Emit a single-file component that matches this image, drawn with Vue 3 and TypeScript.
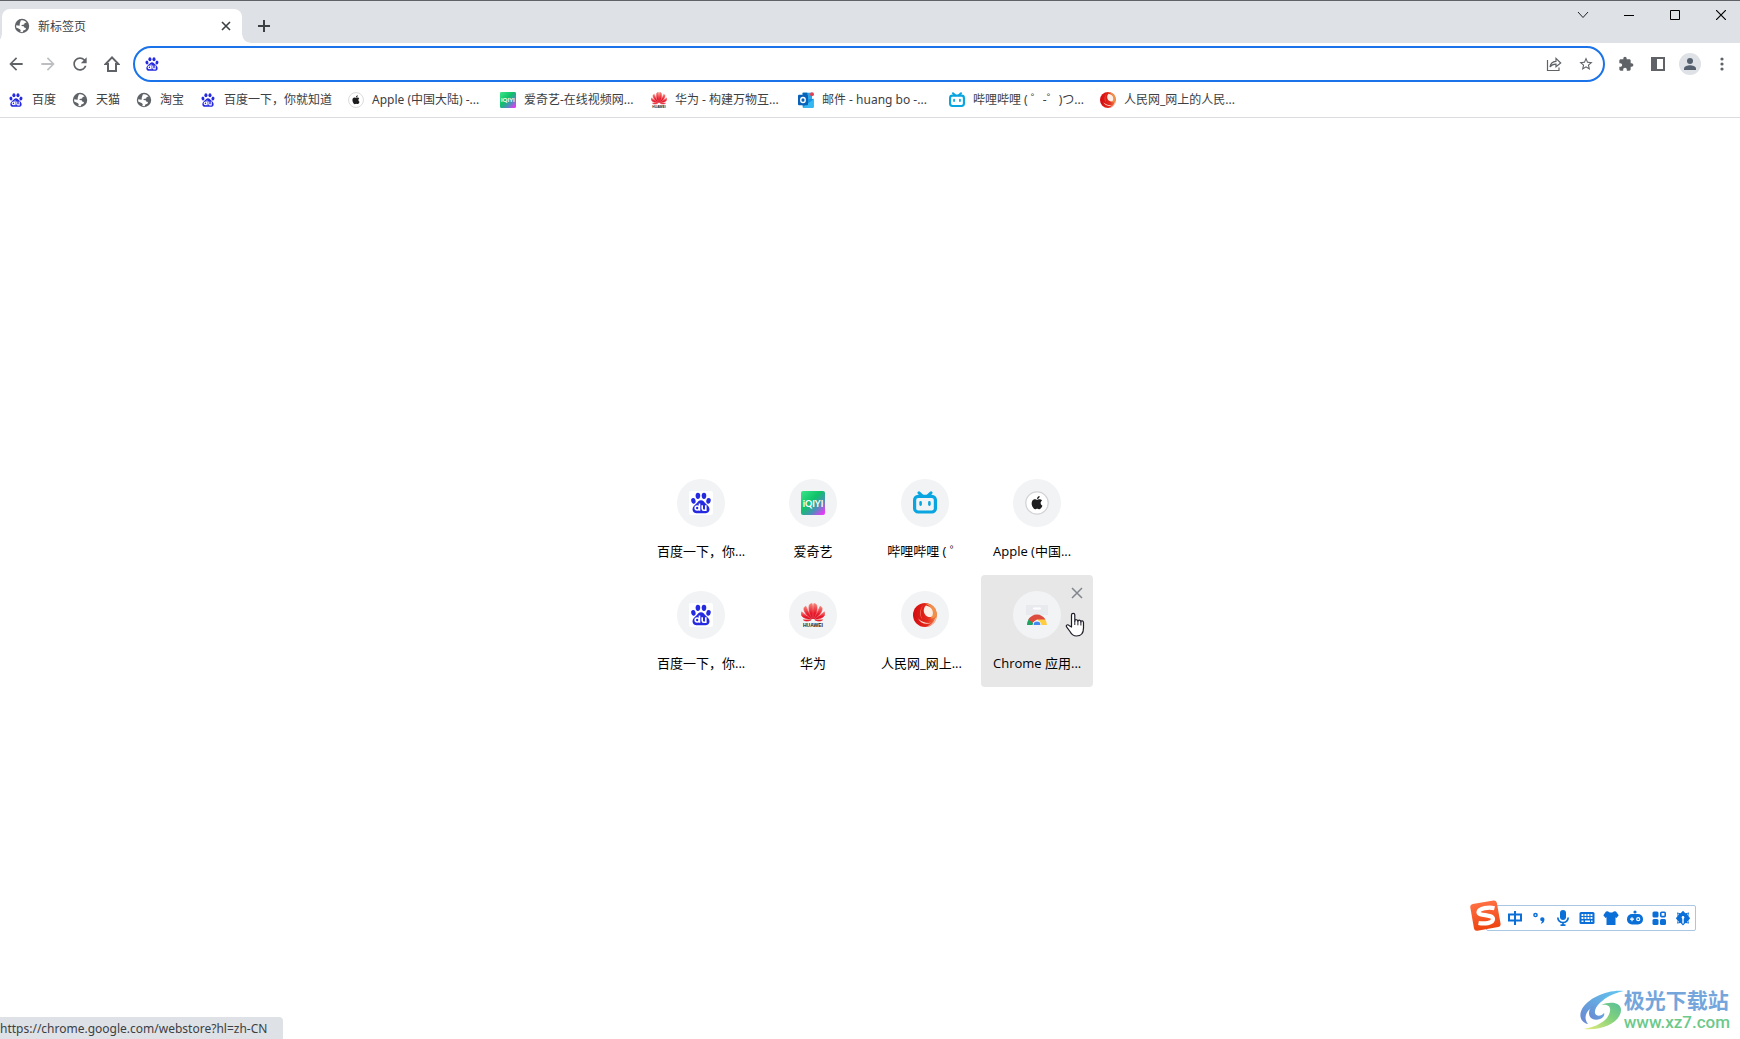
<script setup lang="ts">
import { ref } from 'vue'

interface Bookmark {
  icon: string
  label: string
  width: number
}

interface Shortcut {
  icon: string
  label: string
  clipped?: boolean
  hovered?: boolean
}

const address = ref('')

const bookmarks: Bookmark[] = [
  { icon: 'baidu', label: '百度', width: 24 },
  { icon: 'globe', label: '天猫', width: 24 },
  { icon: 'globe', label: '淘宝', width: 24 },
  { icon: 'baidu', label: '百度一下，你就知道', width: 108 },
  { icon: 'apple', label: 'Apple (中国大陆) -...', width: 112 },
  { icon: 'iqiyi', label: '爱奇艺-在线视频网...', width: 111 },
  { icon: 'huawei', label: '华为 - 构建万物互...', width: 107 },
  { icon: 'outlook', label: '邮件 - huang bo -...', width: 111 },
  { icon: 'bili', label: '哔哩哔哩 ( ゜-゜)つ...', width: 111 },
  { icon: 'people', label: '人民网_网上的人民...', width: 112 },
]

const shortcuts: Shortcut[] = [
  { icon: 'baidu', label: '百度一下，你...', clipped: true },
  { icon: 'iqiyi', label: '爱奇艺' },
  { icon: 'bili', label: '哔哩哔哩 ( ゜' },
  { icon: 'apple', label: 'Apple (中国...', clipped: true },
  { icon: 'baidu', label: '百度一下，你...', clipped: true },
  { icon: 'huawei', label: '华为' },
  { icon: 'people', label: '人民网_网上...', clipped: true },
  { icon: 'store', label: 'Chrome 应用...', clipped: true, hovered: true },
]

const imeTools = ['zhong', 'punct', 'mic', 'keyboard', 'shirt', 'game', 'grid', 'gear']
</script>

<template>
  <div class="browser">
    <svg class="sprite" aria-hidden="true">
      <defs>
        <linearGradient id="g-iqiyi" x1="0" y1="0" x2="1" y2="1">
          <stop offset="0" stop-color="#3be58a" />
          <stop offset=".42" stop-color="#0fc268" />
          <stop offset=".68" stop-color="#4a90b8" />
          <stop offset=".92" stop-color="#e23cf5" />
        </linearGradient>
        <linearGradient id="g-huawei" x1="0" y1="0" x2="0" y2="1">
          <stop offset="0" stop-color="#f5837a" />
          <stop offset=".6" stop-color="#ea1c2c" />
          <stop offset="1" stop-color="#d80a1e" />
        </linearGradient>
        <linearGradient id="g-people" x1="0" y1="0" x2="1" y2="0">
          <stop offset="0" stop-color="#d40a10" />
          <stop offset=".6" stop-color="#e32a1c" />
          <stop offset="1" stop-color="#f08a44" />
        </linearGradient>
        <linearGradient id="g-sogou" x1="0" y1="0" x2="0" y2="1">
          <stop offset="0" stop-color="#ff7043" />
          <stop offset="1" stop-color="#ee4410" />
        </linearGradient>
        <linearGradient id="g-swirl-a" x1="0" y1="1" x2="1" y2="0">
          <stop offset="0" stop-color="#6a86d0" />
          <stop offset="1" stop-color="#62c8f0" />
        </linearGradient>
        <linearGradient id="g-swirl-b" x1="0" y1="1" x2="1" y2="0">
          <stop offset="0" stop-color="#e8ec7a" />
          <stop offset=".6" stop-color="#7fd07c" />
          <stop offset="1" stop-color="#58bf9c" />
        </linearGradient>
      </defs>
      <symbol id="i-baidu" viewBox="0 0 24 24">
        <rect width="24" height="24" rx="2" fill="#fff" />
        <g fill="#2529e0">
          <ellipse cx="8.900" cy="4.800" rx="2.300" ry="3.100" />
          <ellipse cx="15" cy="4.800" rx="2.300" ry="3.100" />
          <ellipse cx="4.400" cy="9.800" rx="2.200" ry="2.900" transform="rotate(-12 4.400 9.800)" />
          <ellipse cx="19.500" cy="9.800" rx="2.200" ry="2.900" transform="rotate(12 19.500 9.800)" />
          <path d="M12 9.200c2.200 0 3.300 1.900 4.600 3.300 1.600 1.700 3.900 3.200 3.900 5.700 0 2.600-1.800 4.100-4.200 4.100H7.700c-2.400 0-4.200-1.500-4.200-4.100 0-2.500 2.300-4 3.900-5.700 1.300-1.400 2.400-3.300 4.600-3.300z" />
        </g>
        <g fill="none" stroke="#fff" stroke-width="1.600">
          <circle cx="8.200" cy="17" r="2" />
          <path d="M10.500 12.600v7.200M13.200 14.200v3.400c0 1.300.7 1.700 1.600 1.700h2v-5.100" />
        </g>
      </symbol>
      <symbol id="i-globe" viewBox="0 0 16 16">
        <circle cx="8" cy="8" r="7.200" fill="#5f6368" />
        <path d="M6.800 2.400c2.800-.6 4.800.5 5.800 2.200l-1.900.4-.6 1.500-2.300.4-.5 1.200 2.400.1.800 1.500 1.500.3-.6 1.800-2.100.7-.6 1.700-2.300-.2.300-1.900-1.200-1.200-3.300-1.400L2.200 7.300 5.600 7.700 5.800 5.400z" fill="#fff" />
      </symbol>
      <symbol id="i-apple" viewBox="0 0 24 24">
        <circle cx="12" cy="12" r="11.200" fill="#fff" stroke="#d2d2d6" stroke-width="1.200" />
        <g transform="translate(5.400 5) scale(.55)" fill="#1d1d1f">
          <path d="M12.152 6.896c-.948 0-2.415-1.078-3.960-1.040-2.040.027-3.910 1.183-4.961 3.014-2.117 3.675-.546 9.103 1.519 12.090 1.013 1.454 2.208 3.090 3.792 3.039 1.520-.065 2.090-.987 3.935-.987 1.831 0 2.350.987 3.960.948 1.637-.026 2.676-1.480 3.676-2.948 1.156-1.688 1.636-3.325 1.662-3.415-.039-.013-3.182-1.221-3.220-4.857-.026-3.040 2.480-4.494 2.597-4.559-1.429-2.090-3.623-2.324-4.390-2.376-2-.156-3.675 1.090-4.610 1.090zM15.530 3.830c.843-1.012 1.400-2.427 1.245-3.830-1.207.052-2.662.805-3.532 1.818-.780.896-1.454 2.338-1.273 3.714 1.338.104 2.715-.688 3.560-1.702z" />
        </g>
      </symbol>
      <symbol id="i-iqiyi" viewBox="0 0 24 24">
        <rect width="24" height="24" rx="2" fill="url(#g-iqiyi)" />
      </symbol>
      <symbol id="i-huawei" viewBox="0 0 24 24">
        <g fill="url(#g-huawei)" stroke="url(#g-huawei)" stroke-width=".7">
          <path d="M11.500 16C8.600 11.500 7.200 6.300 8.300 2.200c.2-.9 1.700-1.600 2.800-1.700.9 4.500.9 10.500.4 15.500z" />
          <path d="M12.500 16c2.900-4.500 4.300-9.700 3.200-13.800-.2-.9-1.700-1.600-2.800-1.700-.9 4.500-.9 10.500-.4 15.500z" />
          <path d="M10.700 16C6.500 13.200 2.700 9 2.900 5.600c.1-1.200 1-2 2-2.400C6.500 7.600 9 12 10.700 16z" />
          <path d="M13.300 16c4.200-2.800 8-7 7.800-10.400-.1-1.200-1-2-2-2.400C17.500 7.600 15 12 13.300 16z" />
          <path d="M10.200 16.500C6 16.300 1.300 14.600.3 11.800c-.4-1.200-.2-2.200.3-3C3.600 11.500 7.500 14 10.200 16.500z" />
          <path d="M13.800 16.500c4.200-.2 8.900-1.900 9.900-4.700.4-1.200.2-2.200-.3-3-3 2.700-6.900 5.200-9.600 7.700z" />
          <path d="M9.800 17.100c-2.600 1.100-5.600 1.500-7.800-.6 2.600.1 5.200.2 7.800.6zM14.200 17.100c2.600 1.100 5.600 1.500 7.800-.6-2.600.1-5.200.2-7.800.6z" />
        </g>
      </symbol>
      <symbol id="i-outlook" viewBox="0 0 24 24">
        <rect x="7" y="1" width="14" height="20" rx="1" fill="#28a8ea" />
        <path d="M7 1h7v10H7z" fill="#0364b8" />
        <path d="M7 12l16.500-2v12c0 1-.6 1.600-1.500 1.600H8.500C7.600 23.600 7 23 7 22z" fill="#1490df" />
        <path d="M7 23l16.500-12v11c0 1-.6 1.600-1.500 1.600H8z" fill="#35b8f1" />
        <rect y="4" width="15" height="16" rx="1.500" fill="#0a62b8" />
        <ellipse cx="7.500" cy="12" rx="3.400" ry="3.800" fill="none" stroke="#fff" stroke-width="2" />
        <circle cx="21" cy="3.500" r="3" fill="#e8404f" />
      </symbol>
      <symbol id="i-bili" viewBox="0 0 24 24">
        <g fill="none" stroke="#08a5e0" stroke-linecap="round">
          <rect x="1.600" y="5.400" width="20.800" height="15.600" rx="3.600" stroke-width="3.200" />
          <path d="M6 1.800l3.200 3M18 1.800l-3.200 3" stroke-width="3" />
          <path d="M7.600 11.400v2.200M16.400 11.400v2.200" stroke-width="2.600" />
        </g>
      </symbol>
      <symbol id="i-people" viewBox="0 0 24 24">
        <circle cx="12" cy="12" r="12" fill="url(#g-people)" />
        <path d="M13 2.500C9.800 5 10 10.800 13.800 13.200c2.500 1.500 5 1 6.600-.6C22 8 19 4 13 2.500z" fill="#fdeee6" />
        <path d="M12 .5C19 0 24 5.500 23.600 12.500c-1.600 2.300-4 3.300-6.300 3 4.500-3.500 3.500-11.500-5.300-15z" fill="#f0904a" />
        <path d="M10.500 2C6.500 6 6 12.500 9.500 16.500 7.200 13 6.900 6 10.500 2z" fill="#f5805f" />
        <path d="M5 15.500c2.500 4.800 8 6.700 13.200 4.300-5 .6-9.700-.7-13.200-4.300z" fill="#fbd9cc" />
        <path d="M23.600 14A12 12 0 0 1 13 24c5-2.200 8-5 9-8.500z" fill="#fff" opacity=".55" />
      </symbol>
      <symbol id="i-store" viewBox="0 0 24 24">
        <path d="M1 2h22v10H1z" fill="#e8eaed" />
        <rect x="8" y="4.500" width="8" height="2" rx="1" fill="#fff" />
        <path d="M2 22a10 10 0 0 1 3.300-7.500L9 22z" fill="#1ea362" />
        <path d="M22 22a10 10 0 0 0-3-7h-7l3 7z" fill="#ffcd40" />
        <path d="M3.300 16.500a10 10 0 0 1 17.200 0H12l-4.300 3.200z" fill="#dd4b3e" />
        <path d="M7.600 22a4.400 4.400 0 0 1 8.800 0z" fill="#fff" />
        <path d="M8.600 22a3.400 3.400 0 0 1 6.800 0z" fill="#4688f1" />
      </symbol>

      <symbol id="i-zhong" viewBox="0 0 16 16">
        <path d="M2 4.500h12v6H2zM8 1v14" fill="none" stroke="#0b6fd8" stroke-width="2" />
      </symbol>
      <symbol id="i-punct" viewBox="0 0 16 16">
        <circle cx="4.500" cy="5" r="1.600" fill="none" stroke="#0b6fd8" stroke-width="1.500" />
        <path d="M11.200 7.300a2.200 2.200 0 0 1 2.200 2.500c0 2-1.100 3.300-3 4l-.5-1.100c.8-.3 1.200-.7 1.300-1.300a2.050 2.050 0 1 1 0-4.100z" fill="#0b6fd8" />
      </symbol>
      <symbol id="i-mic" viewBox="0 0 16 16">
        <rect x="5" width="6" height="10" rx="3" fill="#0b6fd8" />
        <path d="M2.800 7.500a5.200 5 0 0 0 10.400 0M8 12.500V15M5.500 15.200h5" fill="none" stroke="#0b6fd8" stroke-width="1.700" />
      </symbol>
      <symbol id="i-keyboard" viewBox="0 0 16 16">
        <rect x=".5" y="2" width="15" height="12" rx="1.500" fill="#0b6fd8" />
        <path d="M2.500 5h11M2.500 8h11" stroke="#fff" stroke-width="1.800" stroke-dasharray="1.900 1.100" />
        <path d="M2.500 11.300h2M6 11.300h5M12 11.300h1.500" stroke="#fff" stroke-width="1.500" />
      </symbol>
      <symbol id="i-shirt" viewBox="0 0 16 16">
        <path d="M5 1.200c1 1.700 5 1.700 6 0l2 .3 2.700 3.700-2.200 2.700-1-.6V15h-9V7.300l-1 .6L.3 5.200 3 1.500z" fill="#0b6fd8" />
      </symbol>
      <symbol id="i-game" viewBox="0 0 16 16">
        <circle cx="8" cy="2" r="1.600" fill="#0b6fd8" />
        <rect x="0" y="4" width="16" height="10.500" rx="5" fill="#0b6fd8" />
        <path d="M3 9.200h4M5 7.200v4" stroke="#fff" stroke-width="1.200" />
        <circle cx="11.200" cy="9.200" r="1.500" fill="none" stroke="#fff" stroke-width="1.200" />
      </symbol>
      <symbol id="i-grid" viewBox="0 0 16 16">
        <g fill="#0b6fd8">
          <rect x="1.500" y="1.500" width="6" height="6" rx="1.500" />
          <rect x="1.500" y="9" width="6" height="6" rx="1.500" />
          <rect x="9" y="9" width="6" height="6" rx="1.500" />
        </g>
        <rect x="9.800" y="2.200" width="4.400" height="4.400" rx=".8" fill="none" stroke="#0b6fd8" stroke-width="1.600" />
      </symbol>
      <symbol id="i-gear" viewBox="0 0 16 16">
        <path d="M8 .8l2.400 2.400 3.700-.6-.7 3.400 1.700 2.200-1.700 2.200.7 3.200-3.700-.5L8 15.400l-2.400-2.300-3.700.5.700-3.200L.9 8.200 2.600 6l-.7-3.400 3.700.6z" fill="#0b6fd8" />
        <path d="M8 13.500V7.500" stroke="#fff" stroke-width="1.400" />
        <circle cx="8" cy="7.400" r="1.300" fill="#fff" />
        <path d="M3.200 3.500v1.600M12.800 3.500v1.600M3.200 11v1.600M12.800 11v1.600" stroke="#fff" stroke-width=".8" />
      </symbol>
    </svg>

    <header class="tab-strip">
      <div class="tab">
        <svg class="tab-icon" viewBox="0 0 16 16"><use href="#i-globe" /></svg>
        <span class="tab-title">新标签页</span>
        <button class="tab-close" aria-label="关闭标签页">
          <svg width="10" height="10" viewBox="0 0 10 10"><path d="M1 1l8 8M9 1l-8 8" stroke="#3c4043" stroke-width="1.600" /></svg>
        </button>
      </div>
      <button class="new-tab" aria-label="打开新的标签页">
        <svg width="12" height="12" viewBox="0 0 12 12"><path d="M6 0v12M0 6h12" stroke="#3c4043" stroke-width="2" /></svg>
      </button>
      <div class="window-controls">
        <button aria-label="搜索标签页">
          <svg width="12" height="12" viewBox="0 0 12 12"><path d="M1 3l5 5.500L11 3" fill="none" stroke="#222" /></svg>
        </button>
        <button aria-label="最小化">
          <svg width="10" height="10" viewBox="0 0 10 10"><path d="M0 5.500h10" stroke="#000" /></svg>
        </button>
        <button aria-label="最大化">
          <svg width="10" height="10" viewBox="0 0 10 10"><path d="M.5.500h9v9h-9z" fill="none" stroke="#000" /></svg>
        </button>
        <button aria-label="关闭">
          <svg width="10" height="10" viewBox="0 0 10 10"><path d="M0 0l10 10M10 0L0 10" stroke="#000" stroke-width="1.200" /></svg>
        </button>
      </div>
    </header>

    <div class="toolbar">
      <button class="tool" aria-label="后退">
        <svg width="20" height="20" viewBox="0 0 24 24"><path d="M20 10.900H7.800l5.600-5.500L12 4l-8 8 8 8 1.400-1.400-5.600-5.500H20z" fill="#5f6368" /></svg>
      </button>
      <button class="tool" aria-label="前进">
        <svg width="20" height="20" viewBox="0 0 24 24"><path d="M4 10.900h12.200l-5.600-5.500L12 4l8 8-8 8-1.400-1.400 5.600-5.500H4z" fill="#bcbec1" /></svg>
      </button>
      <button class="tool" aria-label="重新加载">
        <svg width="20" height="20" viewBox="0 0 24 24"><path d="M17.650 6.350C16.200 4.900 14.210 4 12 4c-4.420 0-7.990 3.580-7.990 8s3.570 8 7.990 8c3.730 0 6.840-2.550 7.730-6h-2.080c-.82 2.330-3.040 4-5.650 4-3.310 0-6-2.690-6-6s2.690-6 6-6c1.660 0 3.140.69 4.220 1.780L13 11h7V4z" fill="#5f6368" /></svg>
      </button>
      <button class="tool" aria-label="主页">
        <svg width="16" height="16" viewBox="0 0 16 16"><path d="M8 1.400L1.600 8H4v7h8V8h2.400z" fill="none" stroke="#5f6368" stroke-width="2" /></svg>
      </button>
      <div class="omnibox">
        <svg class="site-icon" viewBox="0 0 24 24"><use href="#i-baidu" /></svg>
        <input v-model="address" class="address" type="text" aria-label="地址和搜索栏" />
        <button class="tool" aria-label="分享">
          <svg width="16" height="16" viewBox="0 0 16 16"><path d="M1.500 4v10.500h11.500v-3M4 11c.4-3.600 2.400-5.500 6-5.700V2.400L14.700 7 10 10.800V8.200C7.300 8.100 5.400 9 4 11z" fill="none" stroke="#5f6368" stroke-width="1.200" /></svg>
        </button>
        <button class="tool" aria-label="为此标签页添加书签">
          <svg width="16" height="16" viewBox="0 0 24 24"><path d="M22 9.240l-7.190-.62L12 2 9.190 8.630 2 9.240l5.460 4.730L5.820 21 12 17.270 18.180 21l-1.630-7.030zM12 15.400l-3.760 2.270 1-4.280-3.320-2.880 4.380-.38L12 6.100l1.710 4.040 4.380.38-3.320 2.880 1 4.280z" fill="#5f6368" /></svg>
        </button>
      </div>
      <div class="toolbar-end">
        <button class="tool" aria-label="扩展程序">
          <svg width="16" height="16" viewBox="0 0 24 24"><path d="M20.500 11H19V7c0-1.100-.9-2-2-2h-4V3.500C13 2.120 11.880 1 10.500 1S8 2.120 8 3.500V5H4c-1.100 0-1.990.9-1.990 2v3.800H3.500c1.490 0 2.700 1.210 2.700 2.700s-1.210 2.700-2.700 2.700H2V20c0 1.100.9 2 2 2h3.800v-1.500c0-1.490 1.210-2.700 2.700-2.700s2.700 1.210 2.700 2.700V22H17c1.100 0 2-.9 2-2v-4h1.500c1.380 0 2.500-1.120 2.500-2.500S21.880 11 20.500 11z" fill="#5f6368" /></svg>
        </button>
        <button class="tool" aria-label="侧边栏">
          <svg width="14" height="14" viewBox="0 0 14 14"><path d="M0 0h14v14H0zM6 2v10h6V2z" fill="#5f6368" fill-rule="evenodd" /></svg>
        </button>
        <button class="tool" aria-label="个人资料">
          <svg width="22" height="22" viewBox="0 0 22 22"><circle cx="11" cy="11" r="11" fill="#dee1e6" /><circle cx="11" cy="8" r="3" fill="#55606f" /><path d="M5 17v-1.500C5 13.300 9 12.300 11 12.300s6 1 6 3.200V17z" fill="#55606f" /></svg>
        </button>
        <button class="tool" aria-label="自定义及控制">
          <svg width="4" height="14" viewBox="0 0 4 14"><g fill="#5f6368"><circle cx="2" cy="2" r="1.600" /><circle cx="2" cy="7" r="1.600" /><circle cx="2" cy="12" r="1.600" /></g></svg>
        </button>
      </div>
    </div>

    <nav class="bookmarks" aria-label="书签">
      <a v-for="(b, i) in bookmarks" :key="i" class="bookmark" href="#">
        <svg class="bookmark-icon" viewBox="0 0 24 24">
          <use :href="'#i-' + b.icon" />
          <text v-if="b.icon === 'iqiyi'" class="iqiyi-word" x="12" y="15.500">iQIYI</text>
          <text v-if="b.icon === 'huawei'" class="huawei-word" x="12" y="23.500">HUAWEI</text>
        </svg>
        <span class="bookmark-label" :style="{ width: b.width + 'px' }">{{ b.label }}</span>
      </a>
    </nav>

    <main class="content">
      <div class="tiles">
        <div v-for="(s, i) in shortcuts" :key="i" class="tile" :class="{ hovered: s.hovered }">
          <a class="tile-link" href="#">
            <span class="tile-circle">
              <svg width="24" height="24" viewBox="0 0 24 24">
                <use :href="'#i-' + s.icon" />
                <text v-if="s.icon === 'iqiyi'" class="iqiyi-word" x="12" y="15.500">iQIYI</text>
                <text v-if="s.icon === 'huawei'" class="huawei-word" x="12" y="23.500">HUAWEI</text>
              </svg>
            </span>
            <span class="tile-label" :class="{ clipped: s.clipped }">{{ s.label }}</span>
          </a>
          <button v-if="s.hovered" class="tile-remove" aria-label="移除">
            <svg width="12" height="12" viewBox="0 0 12 12"><path d="M1 1l10 10M11 1L1 11" stroke="#80868b" stroke-width="1.500" /></svg>
          </button>
          <svg v-if="s.hovered" class="pointer" width="20" height="25" viewBox="0 0 20 25">
            <path d="M6.500 15V3a1.600 1.600 0 0 1 3.300 0v6.200c0-2 3-2 3.100.2 0-1.800 2.900-1.700 3 .5 0-1.500 2.600-1.400 2.600.8V16c0 5-2.500 8-7 8-3.500 0-5-1.500-6.500-4.500L1.400 14.700c-.7-1.700 1.400-2.600 2.600-1.300z" fill="#fff" stroke="#1c1c28" stroke-width="1.200" stroke-linejoin="round" />
            <path d="M9.800 9v4M12.900 9.500v3.800M15.900 10v3.500" stroke="#1c1c28" />
          </svg>
        </div>
      </div>
    </main>

    <div class="ime">
      <svg class="ime-logo" width="32" height="32" viewBox="0 0 32 32">
        <rect x="2" y="2" width="27" height="27" rx="3" transform="rotate(-10 16 16)" fill="url(#g-sogou)" />
        <path d="M24.500 8.300C19 7 9 8 8.500 12.200 8.200 16.300 23 14 23 19c0 4.500-9 5-14.500 4" fill="none" stroke="#fff" stroke-width="4.200" />
      </svg>
      <button v-for="t in imeTools" :key="t" class="ime-tool" :aria-label="t">
        <svg width="16" height="16" viewBox="0 0 16 16"><use :href="'#i-' + t" /></svg>
      </button>
    </div>

    <div class="brand">
      <svg width="44" height="42" viewBox="0 0 44 42">
        <path d="M44 1C28-1 8 8 2 19c-4 8 0 14 6 15-4-5-3-11 2-15C18 11 30 4 44 1z" fill="url(#g-swirl-a)" />
        <path d="M31 5C20 8 9 15 9 23c0 6 6 8 11 6 3-1 5-4 4-6-2 3-8 4-9 0-1-6 7-13 16-18z" fill="url(#g-swirl-a)" />
        <path d="M21 15c9-4 20-3 20 5C41 31 24 41 4 39c16-3 25-10 26-18 1-5-3-7-9-6z" fill="url(#g-swirl-b)" />
      </svg>
      <div class="brand-text">
        <span class="brand-name">极光下载站</span>
        <span class="brand-url">www.xz7.com</span>
      </div>
    </div>

    <div class="status">https://chrome.google.com/webstore?hl=zh-CN</div>
  </div>
</template>

<style>
body {
  margin: 0;
  background: #fff;
}
</style>

<style scoped>
.browser {
  position: relative;
  display: flex;
  flex-direction: column;
  min-height: 100vh;
  overflow: hidden;
  background: #fff;
  color: #3c4043;
  font-family: "Noto Sans", "Noto Sans CJK SC", sans-serif;
  font-size: 12px;
  line-height: 16px;
}

.sprite {
  position: absolute;
  width: 0;
  height: 0;
}

button {
  display: flex;
  align-items: center;
  justify-content: center;
  box-sizing: border-box;
  margin: 0;
  padding: 0;
  border: 0;
  background: none;
}

a {
  color: inherit;
  text-decoration: none;
}

svg {
  display: block;
  flex: none;
}

.tab-strip {
  display: flex;
  align-items: flex-end;
  height: 42px;
  padding-left: 2px;
  border-top: 1px solid #5f6368;
  background: #dee1e6;
}

.tab {
  position: relative;
  display: flex;
  align-items: center;
  box-sizing: border-box;
  width: 240px;
  height: 34px;
  padding: 0 8px 0 12px;
  border-radius: 8px 8px 0 0;
  background: #fff;
}

.tab::before,
.tab::after {
  position: absolute;
  bottom: 0;
  width: 8px;
  height: 8px;
  content: "";
}

.tab::before {
  right: 100%;
  background: radial-gradient(circle at 0 0, transparent 7px, #fff 8px);
}

.tab::after {
  left: 100%;
  background: radial-gradient(circle at 100% 0, transparent 7px, #fff 8px);
}

.tab-icon {
  width: 16px;
  height: 16px;
}

.tab-title {
  flex: 1;
  padding-top: 2px;
  margin-left: 8px;
}

.tab-close {
  width: 16px;
  height: 16px;
}

.new-tab {
  width: 28px;
  height: 34px;
  margin-left: 8px;
}

.window-controls {
  display: flex;
  align-self: flex-start;
  margin-left: auto;
}

.window-controls button {
  width: 46px;
  height: 28px;
}

.window-controls button:last-child {
  width: 42px;
  padding-left: 4px;
}

.toolbar {
  display: flex;
  align-items: center;
  height: 42px;
}

.tool {
  width: 32px;
  height: 32px;
}

.omnibox {
  display: flex;
  flex: 1;
  align-items: center;
  box-sizing: border-box;
  height: 36px;
  margin: 0 5px;
  padding-right: 1px;
  padding-left: 9px;
  border: 2px solid #1a73e8;
  border-radius: 18px;
}

.site-icon {
  width: 16px;
  height: 16px;
}

.address {
  flex: 1;
  min-width: 0;
  height: 24px;
  padding: 0 8px;
  border: 0;
  outline: 0;
  background: none;
  font: inherit;
}

.toolbar-end {
  display: flex;
  padding-right: 2px;
}

.bookmarks {
  display: flex;
  gap: 16px;
  align-items: center;
  box-sizing: border-box;
  height: 33px;
  padding-bottom: 2px;
  padding-left: 8px;
  border-bottom: 1px solid #dadce0;
}

.bookmark {
  display: flex;
  gap: 8px;
  align-items: center;
}

.bookmark-icon {
  width: 16px;
  height: 16px;
}

.bookmark-label {
  white-space: nowrap;
}

.iqiyi-word {
  fill: #fff;
  font-family: Lato, sans-serif;
  font-size: 9px;
  font-weight: 700;
  text-anchor: middle;
}

.huawei-word {
  fill: #231815;
  font-family: "Liberation Sans", sans-serif;
  font-size: 5px;
  font-weight: 700;
  text-anchor: middle;
}

.content {
  display: flex;
  flex: 1;
  align-items: center;
  justify-content: center;
  padding: 0 2px 8px 0;
}

.tiles {
  display: grid;
  grid-template-columns: repeat(4, 112px);
}

.tile {
  position: relative;
  height: 112px;
  border-radius: 4px;
}

.tile.hovered {
  background: #e7e7e7;
}

.tile-link {
  display: flex;
  flex-direction: column;
  gap: 16px;
  align-items: center;
  padding-top: 16px;
}

.tile-circle {
  display: flex;
  align-items: center;
  justify-content: center;
  width: 48px;
  height: 48px;
  border-radius: 50%;
  background: #f1f3f4;
}

.tile-label {
  width: 88px;
  color: #000;
  font-family: "Open Sans", "Noto Sans CJK SC", sans-serif;
  font-size: 13px;
  text-align: center;
  white-space: nowrap;
}

.tile-label.clipped {
  text-align: left;
}

.tile-remove {
  position: absolute;
  top: 8px;
  right: 6px;
  width: 20px;
  height: 20px;
}

.pointer {
  position: absolute;
  top: 37px;
  right: 8px;
}

.ime {
  position: absolute;
  right: 44px;
  bottom: 108px;
  display: flex;
  align-items: center;
  height: 24px;
  padding-left: 16px;
  border: 1px solid #a9c6e3;
  border-radius: 2px;
  background: #fff;
}

.ime-logo {
  position: absolute;
  top: -6px;
  left: -17px;
}

.ime-tool {
  width: 24px;
  height: 24px;
}

.brand {
  position: absolute;
  right: 10px;
  bottom: 7px;
  display: flex;
  align-items: center;
}

.brand-text {
  display: flex;
  flex-direction: column;
  gap: 1px;
}

.brand-name {
  color: #74a6dc;
  font-size: 21px;
  font-weight: 700;
  line-height: 22px;
}

.brand-url {
  color: #6cc98a;
  font-family: Roboto, sans-serif;
  font-size: 17px;
  font-weight: 500;
  line-height: 20px;
}

.status {
  position: absolute;
  bottom: 0;
  left: 0;
  box-sizing: border-box;
  min-width: 283px;
  height: 22px;
  padding-right: 8px;
  border-radius: 0 4px 0 0;
  background: #dee1e6;
  line-height: 24px;
}
</style>
